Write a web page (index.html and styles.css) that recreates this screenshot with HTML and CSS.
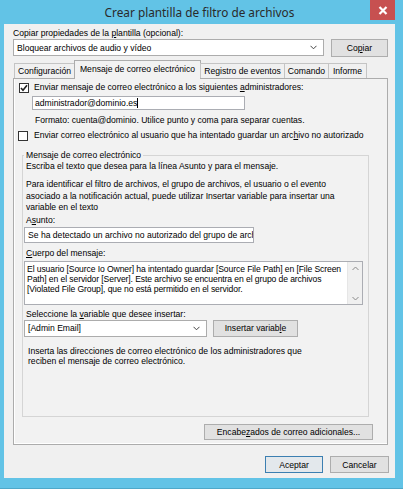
FILE: index.html
```html
<!DOCTYPE html>
<html>
  <head>
    <meta charset="utf-8">
    <title>Crear plantilla de filtro de archivos</title>
    <link rel="stylesheet" href="styles.css">
  </head>
  <body>
    <div class="window">
      <div class="titlebar">
        Crear plantilla de filtro de archivos
        <span class="close">
          <svg width="10" height="9" viewBox="0 0 10 9"><path d="M1.5 1 L8.5 8 M8.5 1 L1.5 8" stroke="#fff" stroke-width="2.2"/></svg>
        </span>
      </div>
      <div class="client">
        <div class="label">Copiar propiedades de la <u>p</u>lantilla (opcional):</div>
        <div class="copy-row">
          <div class="combo wide">
            <span>Bloquear archivos de audio y vídeo</span>
            <svg class="arrow" width="7" height="5" viewBox="0 0 7 5"><path d="M0.5 0.8 L3.5 3.8 L6.5 0.8" fill="none" stroke="#444" stroke-width="1"/></svg>
          </div>
          <div class="button copy">Co<u>p</u>iar</div>
        </div>

        <div class="tabs">
          <div class="tab t1">Configuración</div>
          <div class="tab active t2">Mensaje de correo electrónico</div>
          <div class="tab t3">Registro de eventos</div>
          <div class="tab t4">Comando</div>
          <div class="tab t5">Informe</div>
        </div>

        <div class="panel">
          <div class="check-row first">
            <span class="checkbox">
              <svg width="8" height="8" viewBox="0 0 8 8"><path d="M1 4 L3 6.3 L7 1.2" fill="none" stroke="#222" stroke-width="1.6"/></svg>
            </span>
            <span>Enviar mensaje de correo electrónico a los siguientes <u>a</u>dministradores:</span>
          </div>
          <div class="textbox email">administrador@dominio.es<span class="caret"></span></div>
          <div class="hint">Formato: cuenta@dominio. Utilice punto y coma para separar cuentas.</div>
          <div class="check-row second">
            <span class="checkbox"></span>
            <span>Enviar correo electrónico al usuario que ha intentado guardar un arc<u>h</u>ivo no autorizado</span>
          </div>

          <fieldset class="group">
            <legend>Mensaje de correo electrónico</legend>
            <p class="text">Escriba el texto que desea para la línea Asunto y para el mensaje.</p>
            <p class="text explain">Para identificar el filtro de archivos, el grupo de archivos, el usuario o el evento<br>asociado a la notificación actual, puede utilizar Insertar variable para insertar una<br>variable en el texto</p>
            <div class="label field-label subject-label">A<u>s</u>unto:</div>
            <div class="textbox subject">Se ha detectado un archivo no autorizado del grupo de arch</div>
            <div class="label field-label body-label"><u>C</u>uerpo del mensaje:</div>
            <div class="textarea">
              <div class="textarea-text">El usuario [Source Io Owner] ha intentado guardar [Source File Path] en [File Screen<br>Path] en el servidor [Server]. Este archivo se encuentra en el grupo de archivos<br>[Violated File Group], que no está permitido en el servidor.</div>
              <div class="scrollbar">
                <svg width="7" height="5" viewBox="0 0 7 5"><path d="M0.5 4 L3.5 1 L6.5 4" fill="none" stroke="#8a8a8a" stroke-width="1"/></svg>
                <svg width="7" height="5" viewBox="0 0 7 5"><path d="M0.5 1 L3.5 4 L6.5 1" fill="none" stroke="#8a8a8a" stroke-width="1"/></svg>
              </div>
            </div>
            <div class="label field-label select-label">Seleccione la <u>v</u>ariable que desee insertar:</div>
            <div class="variable-row">
              <div class="combo narrow">
                <span>[Admin Email]</span>
                <svg class="arrow" width="7" height="5" viewBox="0 0 7 5"><path d="M0.5 0.8 L3.5 3.8 L6.5 0.8" fill="none" stroke="#444" stroke-width="1"/></svg>
              </div>
              <div class="button insert">Insertar variab<u>l</u>e</div>
            </div>
            <p class="text note">Inserta las direcciones de correo electrónico de los administradores que<br>reciben el mensaje de correo electrónico.</p>
          </fieldset>

          <div class="button headers">Encabe<u>z</u>ados de correo adicionales...</div>
        </div>

        <div class="footer">
          <div class="button default">Aceptar</div>
          <div class="button">Cancelar</div>
        </div>
      </div>
    </div>
  </body>
</html>
```

FILE: styles.css
```css
* {
  box-sizing: border-box;
}
html, body {
  margin: 0;
  padding: 0;
}
body {
  font-family: "Liberation Sans", Arial, sans-serif;
  font-size: 8.6px;
  color: #000;
  background: #62c3e6;
}
u {
  text-decoration: underline;
  text-underline-offset: 1px;
}

/* window frame */
.window {
  width: 403px;
  height: 489px;
  background: #62c3e6;
  border-bottom: 1px solid #4ea8c9;
  overflow: hidden;
}
.titlebar {
  position: relative;
  height: 24px;
  line-height: 25px;
  text-align: center;
  font-family: "Noto Sans", "Open Sans", sans-serif;
  font-size: 11.8px;
  color: #2a2a2a;
  padding-right: 4px;
}
.close {
  position: absolute;
  top: 0;
  right: 8px;
  width: 25px;
  height: 20px;
  background: #c75050;
  display: flex;
  align-items: center;
  justify-content: center;
}
.client {
  margin: 0 8px 0 4px;
  height: 454px;
  background: #f0f0f0;
  padding: 4px 7px 0 9px;
}

/* common controls */
.label {
  height: 11px;
  line-height: 11px;
  white-space: nowrap;
}
.combo {
  height: 17px;
  background: #fff;
  border: 1px solid #acacac;
  display: flex;
  align-items: center;
  justify-content: space-between;
  padding: 0 6px 0 3px;
  white-space: nowrap;
}
.button {
  height: 18px;
  background: #e1e1e1;
  border: 1px solid #adadad;
  display: flex;
  align-items: center;
  justify-content: center;
  white-space: nowrap;
}
.textbox {
  background: #fff;
  border: 1px solid #abadb3;
  white-space: nowrap;
  overflow: hidden;
  display: flex;
  align-items: center;
  padding-left: 2px;
}
.caret {
  display: inline-block;
  width: 1px;
  height: 10px;
  background: #000;
}

.copy-row {
  display: flex;
  gap: 7px;
}
.combo.wide {
  width: 311px;
}
.button.copy {
  width: 57px;
}

/* tabs */
.tabs {
  margin-top: 3px;
  height: 18px;
  display: flex;
  align-items: flex-end;
  padding-left: 1px;
  position: relative;
  z-index: 1;
}
.tab {
  height: 15px;
  border: 1px solid #c4c4c4;
  border-bottom: none;
  margin-left: -1px;
  background: #f0f0f0;
  display: flex;
  align-items: center;
  justify-content: center;
  white-space: nowrap;
}
.tab.active {
  height: 19px;
  margin-bottom: -1px;
  background: #f2f2f2;
  border-color: #acacac;
  padding-bottom: 2px;
}
.t1 { width: 61px; margin-left: 0; }
.t2 { width: 127px; }
.t3 { width: 85px; }
.t4 { width: 45px; }
.t5 { width: 39px; }

.panel {
  height: 367px;
  border: 1px solid #acacac;
  background: #f2f2f2;
  box-shadow: inset 0 -1px #fff, inset 1px 0 #fff;
  display: flex;
  flex-direction: column;
  align-items: flex-start;
}
.check-row {
  height: 11px;
  line-height: 11px;
  display: flex;
  align-items: center;
  white-space: nowrap;
}
.check-row.first {
  margin-top: 3px;
  padding-left: 5px;
  gap: 5px;
}
.check-row.second {
  margin-top: 4px;
  padding-left: 4px;
  gap: 6px;
}
.checkbox {
  width: 10px;
  height: 10px;
  border: 1px solid #333;
  background: #fff;
  display: flex;
  align-items: center;
  justify-content: center;
}
.textbox.email {
  margin: 3px 0 0 18px;
  width: 213px;
  height: 14px;
}
.hint {
  margin-top: 5px;
  padding-left: 21px;
  height: 11px;
  line-height: 11px;
  white-space: nowrap;
}

/* group box */
.group {
  margin: 9px 0 0 8px;
  width: 347px;
  height: 267px;
  padding: 0;
  border: 1px solid #d5d5d5;
  min-width: 0;
}
.group legend {
  padding: 0 2px;
  margin-left: 1px;
  line-height: 11px;
  height: 11px;
}
.text {
  margin: 0;
  padding-left: 3px;
  line-height: 11px;
  width: 340px;
  white-space: nowrap;
}
.text.explain {
  margin-top: 7px;
  line-height: 11.5px;
}
.field-label {
  padding-left: 3px;
}
.subject-label {
  margin-top: 1px;
}
.textbox.subject {
  margin: 1px 0 0 1px;
  width: 230px;
  height: 16px;
  padding-left: 3px;
}
.body-label {
  margin-top: 5px;
}
.textarea {
  margin: 2px 0 0 1px;
  width: 339px;
  height: 44px;
  background: #fff;
  border: 1px solid #abadb3;
  display: flex;
}
.textarea-text {
  flex: 1;
  padding: 2px 0 0 2px;
  line-height: 10px;
  white-space: nowrap;
  letter-spacing: -0.1px;
}
.scrollbar {
  width: 15px;
  flex: none;
  background: #f0f0f0;
  border-left: 1px solid #e6e6e6;
  display: flex;
  flex-direction: column;
  justify-content: space-between;
  align-items: center;
  padding: 4px 0 3px;
}
.select-label {
  margin-top: 4px;
}
.variable-row {
  display: flex;
  gap: 6px;
  margin-left: 1px;
}
.combo.narrow {
  width: 183px;
}
.button.insert {
  width: 85px;
  height: 17px;
}
.text.note {
  margin-top: 9px;
  padding-left: 5px;
  line-height: 10.5px;
}

.button.headers {
  align-self: flex-end;
  margin: 7px 14px 0 0;
  width: 169px;
  height: 16px;
}

/* dialog buttons */
.footer {
  margin-top: 11px;
  margin-right: -1px;
  display: flex;
  justify-content: flex-end;
  gap: 7px;
}
.footer .button {
  width: 59px;
  height: 17px;
}
.button.default {
  width: 58px;
  border-color: #3c7fb1;
  background: #e3e8ec;
}
```
